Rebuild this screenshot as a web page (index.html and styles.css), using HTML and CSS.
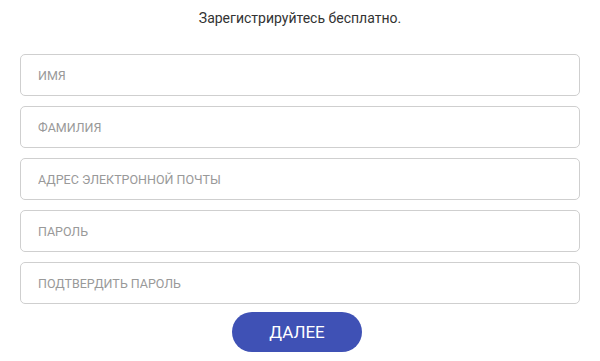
FILE: index.html
```html
<!DOCTYPE html>
<html lang="ru">
<head>
    <meta charset="UTF-8">
    <meta name="viewport" content="width=device-width, initial-scale=1.0">
    <title>Регистрация</title>
    <link rel="stylesheet" href="styles.css">
</head>
<body>
    <form class="signup">
        <h1 class="signup-title">Зарегистрируйтесь бесплатно.</h1>

        <input class="field" type="text" placeholder="ИМЯ">
        <input class="field" type="text" placeholder="ФАМИЛИЯ">
        <input class="field" type="email" placeholder="АДРЕС ЭЛЕКТРОННОЙ ПОЧТЫ">
        <input class="field" type="password" placeholder="ПАРОЛЬ">
        <input class="field" type="password" placeholder="ПОДТВЕРДИТЬ ПАРОЛЬ">

        <button class="next-btn" type="button">ДАЛЕЕ</button>
    </form>
</body>
</html>
```

FILE: styles.css
```css
body {
    margin: 0;
    background-color: #fff;
    font-family: Roboto, "Liberation Sans", Arial, sans-serif;
}
.signup {
    padding: 8px 20px 0;
    text-align: center;
}
.signup-title {
    margin: 0 0 26px;
    font-size: 14px;
    line-height: 20px;
    font-weight: normal;
    color: #333;
}
/* поля ввода */
.field {
    display: block;
    width: 100%;
    height: 42px;
    box-sizing: border-box;
    margin: 0 0 10px;
    padding: 0 17px;
    border: 1px solid #cfcfcf;
    border-radius: 5px;
    background-color: #fff;
    font-family: inherit;
    font-size: 12.5px;
    color: #333;
}
.field::placeholder {
    color: #999;
}
.next-btn {
    width: 130px;
    height: 40px;
    margin: -2px 6px 0 0;
    border: none;
    border-radius: 20px;
    background-color: #3f51b5;
    color: #fff;
    font-family: inherit;
    font-size: 17px;
    cursor: pointer;
}
```
